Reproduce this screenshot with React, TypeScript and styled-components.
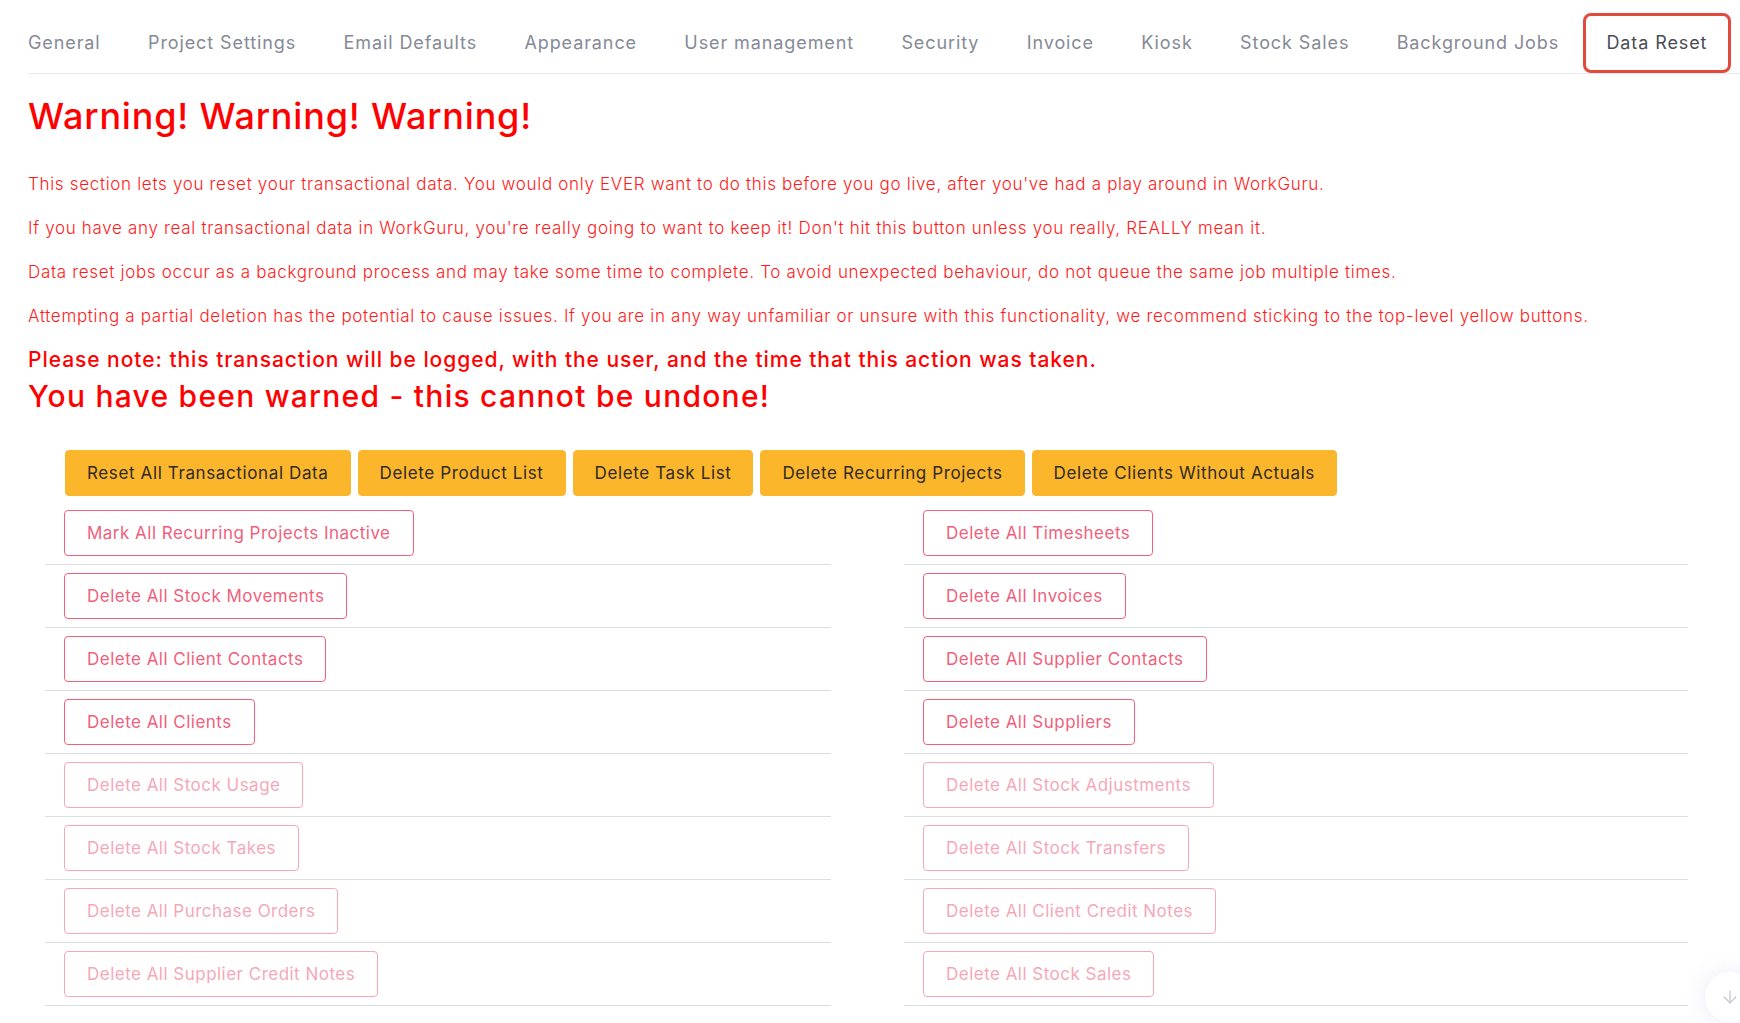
import React from "react";
import styled, { createGlobalStyle } from "styled-components";
import { ArrowDown } from "lucide-react";

const Global = createGlobalStyle`
  html, body { margin: 0; padding: 0; background: #fff; overflow: hidden; }
  body { font-family: Inter, "Noto Sans", "Liberation Sans", sans-serif; }
  * { box-sizing: border-box; }
`;

const Page = styled.div`
  padding: 13px 0 0 28px;
  width: 1740px;
  height: 1023px;
`;

const Nav = styled.nav`
  display: flex;
  border-bottom: 1px solid #e9ebf0;
`;

const Tab = styled.div<{ $active?: boolean }>`
  flex: 0 0 auto;
  white-space: nowrap;
  padding: 15px 20.7px;
  line-height: 24px;
  font-size: 18px;
  letter-spacing: 0.9px;
  color: ${(p) => (p.$active ? "#4a4d55" : "#858a96")};
  border: 3px solid ${(p) => (p.$active ? "#e24a3b" : "transparent")};
  border-radius: 8px;
  &:first-child { padding-left: 0; border-left: 0; }
`;

const Heading = styled.h1`
  margin: 22px 0 35px;
  font-size: 36px;
  line-height: 41px;
  letter-spacing: 0.8px;
  font-weight: 500;
  color: #ff0000;
`;

const Para = styled.p`
  margin: 0 0 20px;
  font-size: 17px;
  line-height: 24px;
  letter-spacing: 0.68px;
  font-weight: 300;
  color: #ff1a1a;
  white-space: nowrap;
`;

const Note = styled.h4`
  margin: 0;
  font-size: 21px;
  line-height: 24px;
  letter-spacing: 0.95px;
  font-weight: 500;
  color: #ff0000;
`;

const Warned = styled.h2`
  margin: 7px 0 0;
  font-size: 30px;
  line-height: 35px;
  letter-spacing: 1.25px;
  font-weight: 500;
  color: #ff0000;
`;

const YellowRow = styled.div`
  display: flex;
  gap: 7px;
  margin: 36px 0 0 37px;
`;

const YellowButton = styled.button`
  font-family: inherit;
  font-size: 17px;
  line-height: 24px;
  letter-spacing: 0.62px;
  padding: 10px 21px;
  border: 1px solid #fcb62b;
  background: #fcb62b;
  color: #2f2a22;
  border-radius: 4px;
`;

const Columns = styled.div`
  display: grid;
  grid-template-columns: 786px 784px;
  column-gap: 73px;
  margin: 6px 0 0 17px;
`;

const Column = styled.div`
  display: flex;
  flex-direction: column;
`;

const Item = styled.div`
  padding: 8px 0 8px 19px;
  border-bottom: 1px solid #dadee5;
`;

const OutlineButton = styled.button<{ $disabled?: boolean }>`
  font-family: inherit;
  font-size: 17px;
  line-height: 24px;
  letter-spacing: 0.48px;
  padding: 10px 22px;
  border: 1px solid #f2607b;
  background: #fff;
  color: #f05f7c;
  border-radius: 4px;
  opacity: ${(p) => (p.$disabled ? 0.55 : 1)};
`;

const ScrollFab = styled.div`
  position: fixed;
  left: 1705px;
  top: 972px;
  width: 50px;
  height: 50px;
  border-radius: 50%;
  background: #fff;
  box-shadow: 0 0 22px rgba(120, 110, 220, 0.16);
  display: flex;
  align-items: center;
  justify-content: center;
  color: #c4c6cf;
`;

const tabs = [
  "General",
  "Project Settings",
  "Email Defaults",
  "Appearance",
  "User management",
  "Security",
  "Invoice",
  "Kiosk",
  "Stock Sales",
  "Background Jobs",
  "Data Reset",
];

const yellow = [
  "Reset All Transactional Data",
  "Delete Product List",
  "Delete Task List",
  "Delete Recurring Projects",
  "Delete Clients Without Actuals",
];

type Btn = { label: string; disabled?: boolean };

const left: Btn[] = [
  { label: "Mark All Recurring Projects Inactive" },
  { label: "Delete All Stock Movements" },
  { label: "Delete All Client Contacts" },
  { label: "Delete All Clients" },
  { label: "Delete All Stock Usage", disabled: true },
  { label: "Delete All Stock Takes", disabled: true },
  { label: "Delete All Purchase Orders", disabled: true },
  { label: "Delete All Supplier Credit Notes", disabled: true },
];

const right: Btn[] = [
  { label: "Delete All Timesheets" },
  { label: "Delete All Invoices" },
  { label: "Delete All Supplier Contacts" },
  { label: "Delete All Suppliers" },
  { label: "Delete All Stock Adjustments", disabled: true },
  { label: "Delete All Stock Transfers", disabled: true },
  { label: "Delete All Client Credit Notes", disabled: true },
  { label: "Delete All Stock Sales", disabled: true },
];

const paragraphs = [
  "This section lets you reset your transactional data. You would only EVER want to do this before you go live, after you've had a play around in WorkGuru.",
  "If you have any real transactional data in WorkGuru, you're really going to want to keep it! Don't hit this button unless you really, REALLY mean it.",
  "Data reset jobs occur as a background process and may take some time to complete. To avoid unexpected behaviour, do not queue the same job multiple times.",
  "Attempting a partial deletion has the potential to cause issues. If you are in any way unfamiliar or unsure with this functionality, we recommend sticking to the top-level yellow buttons.",
];

export default function App() {
  return (
    <Page>
      <Global />
      <Nav>
        {tabs.map((t) => (
          <Tab key={t} $active={t === "Data Reset"}>
            {t}
          </Tab>
        ))}
      </Nav>
      <Heading>Warning! Warning! Warning!</Heading>
      {paragraphs.map((p) => (
        <Para key={p}>{p}</Para>
      ))}
      <Note>Please note: this transaction will be logged, with the user, and the time that this action was taken.</Note>
      <Warned>You have been warned - this cannot be undone!</Warned>
      <YellowRow>
        {yellow.map((y) => (
          <YellowButton key={y}>{y}</YellowButton>
        ))}
      </YellowRow>
      <Columns>
        {[left, right].map((col, i) => (
          <Column key={i}>
            {col.map((b) => (
              <Item key={b.label}>
                <OutlineButton $disabled={b.disabled}>{b.label}</OutlineButton>
              </Item>
            ))}
          </Column>
        ))}
      </Columns>
      <ScrollFab>
        <ArrowDown size={20} strokeWidth={1.5} />
      </ScrollFab>
    </Page>
  );
}
